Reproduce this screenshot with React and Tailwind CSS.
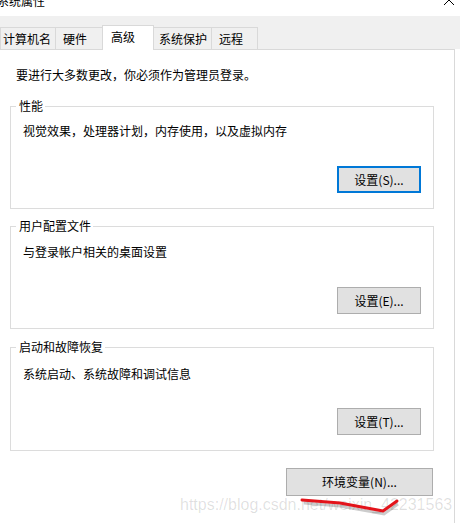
import React from 'react'

const tabs = [
  { label: '计算机名', w: 'w-[56px] pl-[2px]' },
  { label: '硬件', w: 'w-[48px] pl-[7px]' },
  { label: '高级', w: 'w-[52px] pl-[8px]', active: true },
  { label: '系统保护', w: 'w-[59px] pl-[5px]' },
  { label: '远程', w: 'w-[47px] pl-[7px]' },
]

function Button({ children, focused, className = '' }) {
  return (
    <div
      className={`flex items-center justify-center bg-[#e1e1e1] text-[12px] leading-none text-black ${
        focused ? 'border-2 border-[#0078d7]' : 'border border-[#adadad]'
      } ${className}`}
    >
      {children}
    </div>
  )
}

function Group({ title, desc, button, focused, className = '', pad = 'pt-[16px]', gap = 'mt-[27px]' }) {
  return (
    <div className={`relative mx-[10px] w-[424px] border border-[#dcdcdc] ${className}`}>
      {/* legend sits on the top border */}
      <span className="absolute left-[5px] top-[-9px] bg-white pl-[3px] pr-[2px] text-[12px] leading-[16px]">
        {title}
      </span>
      <p className={`pl-[12px] ${pad} text-[12px] leading-[16px]`}>{desc}</p>
      <Button focused={focused} className={`ml-[326px] ${gap} w-[84px] h-[27px]`}>
        {button}
      </Button>
    </div>
  )
}

export default function App() {
  return (
    <div
      className="relative w-[460px] h-[523px] overflow-hidden bg-white text-black"
      style={{ fontFamily: '"Noto Sans CJK SC", "Noto Sans", sans-serif' }}
    >
      {/* title bar, cut off at the top */}
      <div className="flex h-[16px] overflow-hidden bg-white">
        <span className="-ml-[3px] -mt-[7px] text-[12px] leading-[16px]">系统属性</span>
        <div className="flex-1" />
        <svg width="10" height="10" viewBox="0 0 10 10" className="-mt-[5px] mr-[6px]">
          <path d="M0 0L10 10M10 0L0 10" stroke="#000" strokeWidth="1" fill="none" />
        </svg>
      </div>

      {/* tab strip */}
      <div className="flex h-[33px] items-end bg-[#f0f0f0]">
        {tabs.map((t, i) => (
          <div
            key={t.label}
            className={`${t.w} ${i > 0 ? '-ml-px' : ''} border-l border-r border-t border-[#d9d9d9] text-[12px] ${
              t.active
                ? 'relative z-10 h-[25px] -mb-px bg-white pt-[3px] leading-[16px]'
                : 'h-[22px] bg-[#f0f0f0] pt-[3px] leading-[16px]'
            }`}
          >
            {t.label}
          </div>
        ))}
      </div>

      {/* tab page */}
      <div className="-ml-px w-[456px] h-[480px] border-t border-r border-[#d9d9d9] bg-white pl-px">
        <p className="pl-[16px] pt-[17px] text-[12px] leading-[16px]">
          要进行大多数更改，你必须作为管理员登录。
        </p>

        <Group
          className="mt-[23px] h-[103px]"
          title="性能"
          desc="视觉效果，处理器计划，内存使用，以及虚拟内存"
          button="设置(S)..."
          focused
        />
        <Group
          className="mt-[17px] h-[103px]"
          pad="pt-[17px]"
          gap="mt-[27px]"
          title="用户配置文件"
          desc="与登录帐户相关的桌面设置"
          button="设置(E)..."
        />
        <Group
          className="mt-[18px] h-[104px]"
          pad="pt-[18px]"
          gap="mt-[26px]"
          title="启动和故障恢复"
          desc="系统启动、系统故障和调试信息"
          button="设置(T)..."
        />

        <Button className="ml-[286px] mt-[17px] w-[147px] h-[28px]">环境变量(N)...</Button>
      </div>

      {/* watermark and red mark over the shot */}
      <span
        className="absolute left-[180px] top-[497px] text-[16px] leading-[16px] text-[rgba(0,0,0,0.13)] whitespace-nowrap"
        style={{ fontFamily: '"Liberation Sans", Arial, sans-serif' }}
      >
        https://blog.csdn.net/weixin_42231563
      </span>
      <svg className="absolute left-0 top-0" width="460" height="523" viewBox="0 0 460 523">
        <path d="M304 503 L340 506 L384 514 L398 504" stroke="rgba(0,0,0,0.2)" strokeWidth="3" fill="none" />
        <path d="M302 500 L340 503 L383 511 L397 501" stroke="#e3141b" strokeWidth="3" fill="none" strokeLinejoin="round" strokeLinecap="round" />
      </svg>
    </div>
  )
}
